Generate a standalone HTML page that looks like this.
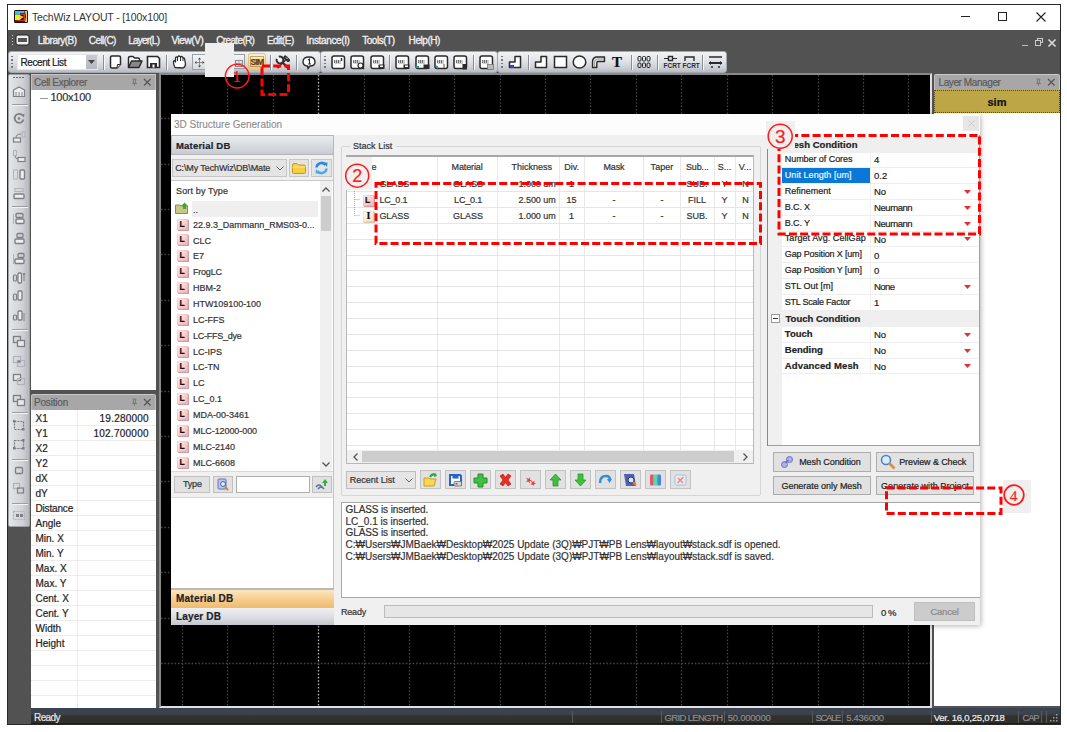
<!DOCTYPE html>
<html><head><meta charset="utf-8"><style>
*{box-sizing:border-box;margin:0;padding:0}
html,body{width:1067px;height:732px;overflow:hidden;background:#fff;font-family:"Liberation Sans",sans-serif;font-size:11px;color:#222}
.a{position:absolute}
.t{position:absolute;white-space:nowrap;line-height:1;-webkit-text-stroke-width:0.2px}
svg{position:absolute;overflow:visible}
</style></head><body>
<div class="a" style="left:7px;top:4px;width:1054px;height:721px;border:1px solid #2a2a2a;background:#525252"></div>
<div class="a" style="left:8px;top:5px;width:1052px;height:25px;background:#fff"></div>
<svg style="left:14px;top:10px" width="14" height="13" viewBox="0 0 14 13"><rect x="0" y="0" width="14" height="13" rx="1.5" fill="#2a0a0a"/><path d="M1 1 H10.5 V3 H6 V4.8 H1 Z" fill="#34c4dc"/><path d="M1 4.8 H5.5 L9 7 L5.5 10.2 H1 Z" fill="#e6f020"/><path d="M6 3.4 H11 V11.6 H4 V10.2 H8.3 Q10 10.2 10 7 Q10 4.8 8.3 4.8 H6 Z" fill="#e63446"/><path d="M5.5 7 H9.5" stroke="#f4b020" stroke-width="1.4"/><path d="M11 1 H13 V12 H11 L12 6.5 Z" fill="#f0dc30"/><rect x="1" y="11" width="10" height="1.2" fill="#5a0a0a"/></svg>
<div class="t" style="left:32.0px;top:12.2px;font-size:10.5px;color:#333;letter-spacing:-0.157px;font-weight:normal;-webkit-text-stroke-width:0">TechWiz LAYOUT - [100x100]</div>
<div class="a" style="left:961px;top:16px;width:9px;height:1px;background:#222"></div>
<div class="a" style="left:998px;top:12px;width:9px;height:9px;border:1px solid #222"></div>
<svg style="left:1036px;top:12px" width="10" height="10" viewBox="0 0 10 10"><path d="M0.5 0.5 L9.5 9.5 M9.5 0.5 L0.5 9.5" stroke="#222" stroke-width="1.1"/></svg>
<div class="a" style="left:8px;top:30px;width:1052px;height:20px;background:#525252"></div>
<svg style="left:11px;top:33px" width="20" height="14" viewBox="0 0 20 14">
<path d="M1.5 2v1M1.5 5v1M1.5 8v1M1.5 11v1" stroke="#ccc" stroke-width="1"/>
<rect x="5" y="2" width="13" height="10" rx="2" fill="#eee" stroke="#222"/>
<rect x="7" y="5" width="9" height="4" fill="#555"/>
</svg>
<div class="t" style="left:37.8px;top:35.5px;font-size:10px;color:#eeeeee;letter-spacing:-0.521px;font-weight:normal;-webkit-text-stroke-width:0.35px">Library(B)</div>
<div class="t" style="left:88.8px;top:35.5px;font-size:10px;color:#eeeeee;letter-spacing:-0.587px;font-weight:normal;-webkit-text-stroke-width:0.35px">Cell(C)</div>
<div class="t" style="left:128.2px;top:35.5px;font-size:10px;color:#eeeeee;letter-spacing:-0.781px;font-weight:normal;-webkit-text-stroke-width:0.35px">Layer(L)</div>
<div class="t" style="left:171.4px;top:35.5px;font-size:10px;color:#eeeeee;letter-spacing:-0.39px;font-weight:normal;-webkit-text-stroke-width:0.35px">View(V)</div>
<div class="t" style="left:216.3px;top:35.5px;font-size:10px;color:#eeeeee;letter-spacing:-0.656px;font-weight:normal;-webkit-text-stroke-width:0.35px">Create(R)</div>
<div class="t" style="left:266.9px;top:35.5px;font-size:10px;color:#eeeeee;letter-spacing:-0.537px;font-weight:normal;-webkit-text-stroke-width:0.35px">Edit(E)</div>
<div class="t" style="left:306.3px;top:35.5px;font-size:10px;color:#eeeeee;letter-spacing:-0.359px;font-weight:normal;-webkit-text-stroke-width:0.35px">Instance(I)</div>
<div class="t" style="left:362.2px;top:35.5px;font-size:10px;color:#eeeeee;letter-spacing:-0.453px;font-weight:normal;-webkit-text-stroke-width:0.35px">Tools(T)</div>
<div class="t" style="left:408.6px;top:35.5px;font-size:10px;color:#eeeeee;letter-spacing:-0.436px;font-weight:normal;-webkit-text-stroke-width:0.35px">Help(H)</div>
<div class="a" style="left:1022px;top:45px;width:6px;height:1px;background:#bbb"></div>
<svg style="left:1035px;top:38px" width="8" height="8" viewBox="0 0 8 8"><rect x="2.5" y="0.5" width="5" height="4" fill="none" stroke="#ccc"/><rect x="0.5" y="2.5" width="5" height="5" fill="#525252" stroke="#ccc"/></svg>
<svg style="left:1048px;top:39px" width="8" height="8" viewBox="0 0 8 8"><path d="M0.5 0.5 L7.5 7.5 M7.5 0.5 L0.5 7.5" stroke="#ddd" stroke-width="1.6"/></svg>
<div class="a" style="left:8px;top:51px;width:313px;height:22px;background:linear-gradient(#f2f3f5 0%,#e3e5e9 40%,#cfd2d7 75%,#b9bdc3 100%);border:1px solid #a4a8ae;border-radius:3px"></div>
<div class="a" style="left:320px;top:51px;width:178px;height:22px;background:linear-gradient(#f2f3f5 0%,#e3e5e9 40%,#cfd2d7 75%,#b9bdc3 100%);border:1px solid #a4a8ae;border-radius:3px"></div>
<div class="a" style="left:497px;top:51px;width:230px;height:22px;background:linear-gradient(#f2f3f5 0%,#e3e5e9 40%,#cfd2d7 75%,#b9bdc3 100%);border:1px solid #a4a8ae;border-radius:3px"></div>
<div class="a" style="left:11px;top:55.5px;width:2px;height:1.6px;background:#7a7a7a"></div>
<div class="a" style="left:11px;top:59px;width:2px;height:1.6px;background:#7a7a7a"></div>
<div class="a" style="left:11px;top:62.5px;width:2px;height:1.6px;background:#7a7a7a"></div>
<div class="a" style="left:11px;top:66px;width:2px;height:1.6px;background:#7a7a7a"></div>
<div class="a" style="left:324px;top:55.5px;width:2px;height:1.6px;background:#7a7a7a"></div>
<div class="a" style="left:324px;top:59px;width:2px;height:1.6px;background:#7a7a7a"></div>
<div class="a" style="left:324px;top:62.5px;width:2px;height:1.6px;background:#7a7a7a"></div>
<div class="a" style="left:324px;top:66px;width:2px;height:1.6px;background:#7a7a7a"></div>
<div class="a" style="left:501px;top:55.5px;width:2px;height:1.6px;background:#7a7a7a"></div>
<div class="a" style="left:501px;top:59px;width:2px;height:1.6px;background:#7a7a7a"></div>
<div class="a" style="left:501px;top:62.5px;width:2px;height:1.6px;background:#7a7a7a"></div>
<div class="a" style="left:501px;top:66px;width:2px;height:1.6px;background:#7a7a7a"></div>
<div class="a" style="left:17px;top:54px;width:81px;height:16px;background:#fff;border:1px solid #e4e6e9"></div>
<div class="a" style="left:86px;top:55px;width:11px;height:14px;background:linear-gradient(#c8ccd1,#b4b8be)"></div>
<svg style="left:88px;top:60px" width="7" height="4"><path d="M0 0 L7 0 L3.5 4 Z" fill="#444"/></svg>
<div class="t" style="left:20.5px;top:57.5px;font-size:10px;color:#1a1a1a;letter-spacing:-0.412px;font-weight:normal;">Recent List</div>
<div class="a" style="left:103px;top:55px;width:1px;height:15px;background:#8a8e94"></div>
<div class="a" style="left:104px;top:55px;width:1px;height:15px;background:#f6f6f6"></div>
<div class="a" style="left:166px;top:55px;width:1px;height:15px;background:#8a8e94"></div>
<div class="a" style="left:167px;top:55px;width:1px;height:15px;background:#f6f6f6"></div>
<div class="a" style="left:270px;top:55px;width:1px;height:15px;background:#8a8e94"></div>
<div class="a" style="left:271px;top:55px;width:1px;height:15px;background:#f6f6f6"></div>
<div class="a" style="left:296px;top:55px;width:1px;height:15px;background:#8a8e94"></div>
<div class="a" style="left:297px;top:55px;width:1px;height:15px;background:#f6f6f6"></div>
<div class="a" style="left:389px;top:55px;width:1px;height:15px;background:#8a8e94"></div>
<div class="a" style="left:390px;top:55px;width:1px;height:15px;background:#f6f6f6"></div>
<div class="a" style="left:473px;top:55px;width:1px;height:15px;background:#8a8e94"></div>
<div class="a" style="left:474px;top:55px;width:1px;height:15px;background:#f6f6f6"></div>
<div class="a" style="left:528px;top:55px;width:1px;height:15px;background:#8a8e94"></div>
<div class="a" style="left:529px;top:55px;width:1px;height:15px;background:#f6f6f6"></div>
<div class="a" style="left:631px;top:55px;width:1px;height:15px;background:#8a8e94"></div>
<div class="a" style="left:632px;top:55px;width:1px;height:15px;background:#f6f6f6"></div>
<div class="a" style="left:657px;top:55px;width:1px;height:15px;background:#8a8e94"></div>
<div class="a" style="left:658px;top:55px;width:1px;height:15px;background:#f6f6f6"></div>
<div class="a" style="left:702px;top:55px;width:1px;height:15px;background:#8a8e94"></div>
<div class="a" style="left:703px;top:55px;width:1px;height:15px;background:#f6f6f6"></div>
<svg style="left:109px;top:55px" width="13" height="14" viewBox="0 0 13 14"><path d="M1.5 2.5 Q1.5 1 3 1 L10 1 Q11.5 1 11.5 2.5 L11.5 9.5 L8 13 L3 13 Q1.5 13 1.5 11.5 Z" fill="#fff" stroke="#2a2a2a" stroke-width="1.5"/><path d="M11.5 9.5 L8.5 9.5 L8 13" fill="#ddd" stroke="#2a2a2a" stroke-width="1"/></svg>
<svg style="left:127px;top:55px" width="16" height="14" viewBox="0 0 16 14"><path d="M1.5 12.5 L1.5 3 Q1.5 1.5 3 1.5 L6 1.5 L7.5 3 L11 3 Q12.5 3 12.5 4.5 L12.5 6" fill="#fff" stroke="#2a2a2a" stroke-width="1.5"/><path d="M1.5 12.5 L4.5 6 L15 6 L12 12.5 Z" fill="#888" stroke="#2a2a2a" stroke-width="1.5" stroke-linejoin="round"/></svg>
<svg style="left:146px;top:55px" width="15" height="14" viewBox="0 0 15 14"><path d="M1.5 1.5 H11.5 L13.5 3.5 V12.5 H1.5 Z" fill="#fff" stroke="#2a2a2a" stroke-width="1.6"/><rect x="4" y="8" width="7" height="5" fill="#2a2a2a"/><rect x="6.5" y="9.5" width="2" height="3" fill="#fff"/></svg>
<svg style="left:172px;top:55px" width="16" height="14" viewBox="0 0 16 14"><path d="M3 12.5 Q1 9 1.5 6.5 Q2 5 3 6 L3.5 7 L3.5 3 Q4 1.5 5 2 L5.5 2.5 L6 1.5 Q7 0.5 8 1.5 L8.5 2 Q9.5 1 10.5 2 L11 3 Q12 2.5 12.5 3.5 L13.5 9 Q13.5 12 11 13 Z" fill="#fff" stroke="#2a2a2a" stroke-width="1.3" stroke-linejoin="round"/><path d="M5.5 2.5 V6 M8.5 2 V6 M11 3 V6" stroke="#2a2a2a" stroke-width="1"/></svg>
<div class="a" style="left:192px;top:54px;width:14px;height:16px;border:1px solid #9aa0a8;background:linear-gradient(#f4f5f7,#d8dbe0)"></div>
<svg style="left:194px;top:57px" width="11" height="11" viewBox="0 0 11 11"><path d="M5.5 0.5 L7 2.5 H4 Z M5.5 10.5 L7 8.5 H4 Z M0.5 5.5 L2.5 4 V7 Z M10.5 5.5 L8.5 4 V7 Z" fill="#444"/><path d="M5.5 2 V9 M2 5.5 H9" stroke="#777" stroke-width="0.8"/></svg>
<div class="a" style="left:233px;top:54px;width:12px;height:15px;border:1px solid #9aa0a8;border-left:none;background:linear-gradient(#f4f5f7,#d8dbe0)"></div>
<svg style="left:235px;top:60px" width="8" height="7" viewBox="0 0 8 7"><rect x="0.5" y="0.5" width="7" height="6" fill="none" stroke="#888"/><path d="M0.5 3.5 H7.5 M4 0.5 V6.5" stroke="#aaa"/></svg>
<div class="a" style="left:248px;top:53px;width:18px;height:17px;border:1px solid #e6c27a;border-radius:2px;background:linear-gradient(#fff0c8,#fcd88e 60%,#f6c870)"></div>
<svg style="left:250px;top:56px" width="14" height="11" viewBox="0 0 14 11"><rect x="0.5" y="0.5" width="13" height="10" fill="none" stroke="#6a5030" stroke-width="0.9" stroke-dasharray="1 1"/></svg>
<div class="t" style="left:250.5px;top:57.8px;font-size:8.5px;color:#5a3a1a;letter-spacing:-0.708px;font-weight:bold;">SIM</div>
<svg style="left:275px;top:55px" width="16" height="14" viewBox="0 0 16 14"><path d="M6.5 6.5 L12.5 12.5" stroke="#303030" stroke-width="2.4" stroke-linecap="round"/><path d="M1.8 3.84 A3.4 3.4 0 1 0 3.84 1.8" fill="#f4f4f4" stroke="#303030" stroke-width="2"/><path d="M11.5 4 L4 11.5" stroke="#333" stroke-width="1.5"/><path d="M4 11.5 L2.5 13" stroke="#203060" stroke-width="1.8"/><path d="M10.2 2.2 L13.2 5.2" stroke="#303030" stroke-width="3.6" stroke-linecap="round"/><path d="M11 2.5 L12.5 4" stroke="#e8e8e8" stroke-width="1"/></svg>
<svg style="left:302px;top:56px" width="14" height="13" viewBox="0 0 14 13"><path d="M7 1 Q13 1 13 6 Q13 10 8 10 L6 12.5 L5.5 10 Q1 9.5 1 6 Q1 1 7 1 Z" fill="#fff" stroke="#2a2a2a" stroke-width="1.4"/><path d="M6 4 L7.5 3 V8 M6 8 H9" stroke="#2a2a2a" stroke-width="1.1" fill="none"/></svg>
<svg style="left:330.5px;top:54.5px" width="15" height="15" viewBox="0 0 15 15"><rect x="1" y="1" width="12.5" height="12.5" rx="2" fill="#fff" stroke="#2a2a2a" stroke-width="1.5"/><path d="M3.5 6 H10 M3.5 8 H10" stroke="#999" stroke-width="1"/><path d="M3.5 5 v3 M5.5 5 v3 M7.5 5 v3" stroke="#555" stroke-width="0.8"/><path d="M10.5 3 V6" stroke="#2a2a2a" stroke-width="1.4"/></svg>
<svg style="left:350px;top:54.5px" width="15" height="15" viewBox="0 0 15 15"><rect x="1" y="1" width="12.5" height="12.5" rx="2" fill="#fff" stroke="#2a2a2a" stroke-width="1.5"/><path d="M3.5 6 H10 M3.5 8 H10" stroke="#999" stroke-width="1"/><path d="M3.5 5 v3 M5.5 5 v3 M7.5 5 v3" stroke="#555" stroke-width="0.8"/><circle cx="10.5" cy="10.5" r="2.5" fill="#fff" stroke="#2a2a2a" stroke-width="1.2"/><path d="M12 12 L14 14" stroke="#2a2a2a" stroke-width="1.4"/></svg>
<svg style="left:369.5px;top:54.5px" width="15" height="15" viewBox="0 0 15 15"><rect x="1" y="1" width="12.5" height="12.5" rx="2" fill="#fff" stroke="#2a2a2a" stroke-width="1.5"/><path d="M3.5 6 H10 M3.5 8 H10" stroke="#999" stroke-width="1"/><path d="M3.5 5 v3 M5.5 5 v3 M7.5 5 v3" stroke="#555" stroke-width="0.8"/><rect x="8.5" y="9.5" width="6" height="4.5" fill="#2a2a2a"/><rect x="10" y="10.5" width="3" height="1.5" fill="#fff"/></svg>
<svg style="left:395px;top:54.5px" width="15" height="15" viewBox="0 0 15 15"><rect x="1" y="1" width="12.5" height="12.5" rx="2" fill="#fff" stroke="#2a2a2a" stroke-width="1.5"/><path d="M3.5 6 H10 M3.5 8 H10" stroke="#999" stroke-width="1"/><path d="M3.5 5 v3 M5.5 5 v3 M7.5 5 v3" stroke="#555" stroke-width="0.8"/><rect x="8.5" y="9.5" width="6" height="4.5" fill="#2a2a2a"/><rect x="10" y="10.5" width="3" height="1.5" fill="#fff"/></svg>
<svg style="left:414.5px;top:54.5px" width="15" height="15" viewBox="0 0 15 15"><rect x="1" y="1" width="12.5" height="12.5" rx="2" fill="#fff" stroke="#2a2a2a" stroke-width="1.5"/><path d="M3.5 6 H10 M3.5 8 H10" stroke="#999" stroke-width="1"/><path d="M3.5 5 v3 M5.5 5 v3 M7.5 5 v3" stroke="#555" stroke-width="0.8"/><rect x="8.5" y="9.5" width="6" height="4.5" fill="#2a2a2a"/><path d="M1 12 L4 12" stroke="#2a9a90" stroke-width="2"/></svg>
<svg style="left:434px;top:54.5px" width="15" height="15" viewBox="0 0 15 15"><rect x="1" y="1" width="12.5" height="12.5" rx="2" fill="#fff" stroke="#2a2a2a" stroke-width="1.5"/><path d="M3.5 6 H10 M3.5 8 H10" stroke="#999" stroke-width="1"/><path d="M3.5 5 v3 M5.5 5 v3 M7.5 5 v3" stroke="#555" stroke-width="0.8"/><path d="M2 11 L4 13" stroke="#2a9a90" stroke-width="2"/><path d="M10 9 V13" stroke="#888" stroke-width="1.5"/></svg>
<svg style="left:453px;top:54.5px" width="15" height="15" viewBox="0 0 15 15"><rect x="1" y="1" width="12.5" height="12.5" rx="2" fill="#fff" stroke="#2a2a2a" stroke-width="1.5"/><path d="M3.5 6 H10 M3.5 8 H10" stroke="#999" stroke-width="1"/><path d="M3.5 5 v3 M5.5 5 v3 M7.5 5 v3" stroke="#555" stroke-width="0.8"/><rect x="9.5" y="9" width="4.5" height="5.5" fill="#2a2a2a"/></svg>
<svg style="left:478.5px;top:54.5px" width="15" height="15" viewBox="0 0 15 15"><rect x="1" y="1" width="12.5" height="12.5" rx="2" fill="#fff" stroke="#2a2a2a" stroke-width="1.5"/><path d="M3.5 6 H10 M3.5 8 H10" stroke="#999" stroke-width="1"/><path d="M3.5 5 v3 M5.5 5 v3 M7.5 5 v3" stroke="#555" stroke-width="0.8"/><rect x="8.5" y="9.5" width="6" height="5" fill="#bbb" stroke="#777" stroke-width="0.8"/></svg>
<svg style="left:508px;top:55px" width="14" height="14" viewBox="0 0 14 14"><path d="M7 1.5 H12.5 V12.5 H1.5 V7 H7 Z" fill="#fff" stroke="#2a2a2a" stroke-width="1.5" stroke-linejoin="round"/><rect x="2" y="10" width="4" height="3" fill="#3040d0"/></svg>
<svg style="left:534px;top:55px" width="14" height="14" viewBox="0 0 14 14"><path d="M7 1.5 H12.5 V12.5 H1.5 V7 H7 Z" fill="#fff" stroke="#2a2a2a" stroke-width="1.5" stroke-linejoin="round"/></svg>
<svg style="left:553px;top:55px" width="15" height="14" viewBox="0 0 15 14"><rect x="1.5" y="1.5" width="12" height="11" fill="#fff" stroke="#2a2a2a" stroke-width="1.5"/></svg>
<svg style="left:572px;top:55px" width="15" height="14" viewBox="0 0 15 14"><ellipse cx="7.5" cy="7" rx="6.3" ry="6" fill="#fff" stroke="#2a2a2a" stroke-width="1.5"/></svg>
<svg style="left:591px;top:55px" width="15" height="14" viewBox="0 0 15 14"><path d="M1.5 12.5 V7 Q1.5 3 5 2 L13.5 2 V6.5 L7 6.5 Q5.8 6.5 5.8 8 V12.5 Z" fill="#e8e8e8" stroke="#2a2a2a" stroke-width="1.4" stroke-linejoin="round"/><path d="M3.5 12.5 V7.5 Q3.5 4.5 6 4 L13 4" fill="none" stroke="#888" stroke-width="0.8"/></svg>
<div class="t" style="left:612.0px;top:55.0px;font-size:15px;color:#111;letter-spacing:0px;font-weight:bold;font-family:'Liberation Serif',serif">T</div>
<svg style="left:637px;top:55px" width="14" height="14" viewBox="0 0 14 14"><g fill="none" stroke="#222" stroke-width="1"><rect x="1" y="1.5" width="3" height="4.5" rx="1"/><rect x="5.5" y="1.5" width="3" height="4.5" rx="1"/><rect x="10" y="1.5" width="3" height="4.5" rx="1"/><rect x="1" y="8" width="3" height="4.5" rx="1"/><rect x="5.5" y="8" width="3" height="4.5" rx="1"/><rect x="10" y="8" width="3" height="4.5" rx="1"/></g></svg>
<svg style="left:663px;top:55px" width="15" height="14" viewBox="0 0 15 14"><path d="M1 3.5 H5 M10 3.5 H14" stroke="#2a2a2a" stroke-width="1"/><rect x="5.5" y="1.5" width="4" height="4" fill="none" stroke="#2a2a2a" stroke-width="1.4"/><text x="0.5" y="13" font-size="6.5" font-family="Liberation Sans" font-weight="bold" fill="#2a2a2a">FCRT</text></svg>
<svg style="left:682px;top:55px" width="15" height="14" viewBox="0 0 15 14"><path d="M3 6 V2 H12 V6" fill="none" stroke="#2a2a2a" stroke-width="1.4"/><text x="0.5" y="13" font-size="6.5" font-family="Liberation Sans" font-weight="bold" fill="#2a2a2a">FCRT</text></svg>
<svg style="left:708px;top:55px" width="15" height="14" viewBox="0 0 15 14"><path d="M1 2 H14" stroke="#2a2a2a" stroke-width="1.5"/><path d="M1 8 H14" stroke="#2a2a2a" stroke-width="2"/><path d="M2 6.5 L4 8 L2 9.5 M13 6.5 L11 8 L13 9.5" fill="none" stroke="#2a2a2a"/><path d="M4 11 V13 M11 11 V13" stroke="#2a2a2a" stroke-width="1.5"/></svg>
<div class="a" style="left:8px;top:74px;width:22px;height:453px;background:linear-gradient(90deg,#e4e6e9,#cdd0d4 70%,#b4b8bd);border:1px solid #9ea2a8;border-radius:2px"></div>
<div class="a" style="left:12px;top:104px;width:16px;height:1px;background:#9a9ea4"></div>
<div class="a" style="left:12px;top:105px;width:16px;height:1px;background:#f4f4f4"></div>
<div class="a" style="left:12px;top:206px;width:16px;height:1px;background:#9a9ea4"></div>
<div class="a" style="left:12px;top:207px;width:16px;height:1px;background:#f4f4f4"></div>
<div class="a" style="left:12px;top:329px;width:16px;height:1px;background:#9a9ea4"></div>
<div class="a" style="left:12px;top:330px;width:16px;height:1px;background:#f4f4f4"></div>
<div class="a" style="left:12px;top:412px;width:16px;height:1px;background:#9a9ea4"></div>
<div class="a" style="left:12px;top:413px;width:16px;height:1px;background:#f4f4f4"></div>
<div class="a" style="left:12px;top:459px;width:16px;height:1px;background:#9a9ea4"></div>
<div class="a" style="left:12px;top:460px;width:16px;height:1px;background:#f4f4f4"></div>
<div class="a" style="left:12px;top:503px;width:16px;height:1px;background:#9a9ea4"></div>
<div class="a" style="left:12px;top:504px;width:16px;height:1px;background:#f4f4f4"></div>
<svg style="left:12px;top:85px" width="14" height="14" viewBox="0 0 14 14"><path d="M1.5 5 L7 2 L12.5 5 V11.5 H1.5 Z" fill="#eee" stroke="#7c8086" stroke-width="1.2"/><path d="M4 7 V11 M7 7 V11 M10 7 V11" stroke="#7c8086"/></svg>
<svg style="left:12px;top:111px" width="14" height="14" viewBox="0 0 14 14"><path d="M11 5 A4.5 4.5 0 1 0 11.5 8.5" fill="none" stroke="#7c8086" stroke-width="1.8"/><circle cx="7" cy="7.5" r="1.3" fill="#7c8086"/><path d="M9.5 3.5 L12.5 3 L12 6.5 Z" fill="#7c8086"/></svg>
<svg style="left:12px;top:130px" width="14" height="14" viewBox="0 0 14 14"><rect x="1.5" y="8" width="7" height="4" fill="#eee" stroke="#7c8086" stroke-width="1.2"/><path d="M4 8 Q4 4 9 4" fill="none" stroke="#7c8086"/><rect x="10" y="2" width="3" height="5" fill="none" stroke="#b0b4ba"/></svg>
<svg style="left:12px;top:149px" width="14" height="14" viewBox="0 0 14 14"><rect x="1.5" y="1.5" width="3" height="5" fill="none" stroke="#b0b4ba"/><path d="M3 7 Q3 10 7 10" fill="none" stroke="#7c8086"/><rect x="6" y="8.5" width="7" height="4" fill="#eee" stroke="#7c8086" stroke-width="1.2"/></svg>
<svg style="left:12px;top:168px" width="14" height="14" viewBox="0 0 14 14"><rect x="1.5" y="2" width="4" height="9" fill="none" stroke="#b0b4ba"/><rect x="8" y="2" width="4.5" height="9" rx="1" fill="#eee" stroke="#7c8086" stroke-width="1.4"/></svg>
<svg style="left:12px;top:187px" width="14" height="14" viewBox="0 0 14 14"><rect x="3" y="1.5" width="8" height="3" fill="none" stroke="#b0b4ba"/><rect x="2" y="7" width="10" height="4.5" rx="1" fill="#eee" stroke="#7c8086" stroke-width="1.4"/></svg>
<svg style="left:12px;top:212px" width="14" height="14" viewBox="0 0 14 14"><rect x="4" y="1.5" width="7" height="4" rx="1" fill="none" stroke="#7c8086" stroke-width="1.3"/><rect x="4" y="7" width="8" height="4.5" rx="1" fill="#eee" stroke="#7c8086" stroke-width="1.4"/><path d="M1.5 2 V12" stroke="#b0b4ba"/></svg>
<svg style="left:12px;top:232px" width="14" height="14" viewBox="0 0 14 14"><rect x="5" y="1.5" width="6" height="4" rx="1" fill="none" stroke="#7c8086" stroke-width="1.3"/><rect x="3" y="7" width="9" height="4.5" rx="1" fill="#eee" stroke="#7c8086" stroke-width="1.4"/></svg>
<svg style="left:12px;top:251.7px" width="14" height="14" viewBox="0 0 14 14"><rect x="6" y="1.5" width="6" height="4" rx="1" fill="none" stroke="#7c8086" stroke-width="1.3"/><rect x="3" y="7" width="9" height="4.5" rx="1" fill="#eee" stroke="#7c8086" stroke-width="1.4"/><path d="M1.5 2 V12" stroke="#b0b4ba"/></svg>
<svg style="left:12px;top:270.5px" width="14" height="14" viewBox="0 0 14 14"><rect x="1.5" y="4" width="3" height="6" rx="1" fill="none" stroke="#7c8086" stroke-width="1.2"/><rect x="6" y="2" width="3.5" height="10" rx="1" fill="#eee" stroke="#7c8086" stroke-width="1.3"/><path d="M12 2 V10 M11 4 L12 2 L13 4" fill="none" stroke="#7c8086"/></svg>
<svg style="left:12px;top:289px" width="14" height="14" viewBox="0 0 14 14"><rect x="1.5" y="5" width="3" height="6" rx="1" fill="none" stroke="#7c8086" stroke-width="1.2"/><rect x="6" y="2" width="4" height="9" rx="1" fill="#eee" stroke="#7c8086" stroke-width="1.3"/></svg>
<svg style="left:12px;top:309px" width="14" height="14" viewBox="0 0 14 14"><rect x="1.5" y="6" width="3" height="5" rx="1" fill="none" stroke="#7c8086" stroke-width="1.2"/><rect x="6" y="2" width="4" height="9" rx="1" fill="#eee" stroke="#7c8086" stroke-width="1.3"/><path d="M12 4 V12" stroke="#7c8086"/></svg>
<svg style="left:12px;top:335px" width="14" height="14" viewBox="0 0 14 14"><rect x="1.5" y="1.5" width="7" height="6" fill="none" stroke="#7c8086" stroke-width="1.3"/><rect x="5.5" y="5.5" width="7" height="6" fill="#e8e8e8" stroke="#7c8086" stroke-width="1.3"/></svg>
<svg style="left:12px;top:355px" width="14" height="14" viewBox="0 0 14 14"><rect x="1.5" y="1.5" width="7" height="6" fill="none" stroke="#b0b4ba" stroke-width="1.2"/><rect x="5.5" y="5.5" width="7" height="6" fill="none" stroke="#b0b4ba" stroke-width="1.2"/><rect x="5.5" y="5.5" width="3" height="2" fill="#7c8086"/></svg>
<svg style="left:12px;top:373px" width="14" height="14" viewBox="0 0 14 14"><rect x="1.5" y="1.5" width="7" height="6" fill="#e8e8e8" stroke="#7c8086" stroke-width="1.3"/><rect x="5.5" y="5.5" width="7" height="6" fill="none" stroke="#b0b4ba" stroke-width="1.2"/></svg>
<svg style="left:12px;top:394px" width="14" height="14" viewBox="0 0 14 14"><rect x="1.5" y="1.5" width="7" height="6" fill="none" stroke="#7c8086" stroke-width="1.3"/><rect x="5.5" y="5.5" width="7" height="6" fill="#e8e8e8" stroke="#7c8086" stroke-width="1.3"/></svg>
<svg style="left:12px;top:418.5px" width="14" height="14" viewBox="0 0 14 14"><rect x="2.5" y="2.5" width="9" height="8" fill="none" stroke="#7c8086" stroke-width="1.2" stroke-dasharray="2 1"/><rect x="1" y="1" width="2.5" height="2.5" fill="#7c8086"/><rect x="10" y="9" width="2.5" height="2.5" fill="#7c8086"/></svg>
<svg style="left:12px;top:438px" width="14" height="14" viewBox="0 0 14 14"><rect x="2.5" y="2.5" width="9" height="8" fill="none" stroke="#7c8086" stroke-width="1.2" stroke-dasharray="2 1"/><rect x="1" y="9" width="2.5" height="2.5" fill="#7c8086"/><rect x="10" y="1" width="2.5" height="2.5" fill="#7c8086"/><rect x="10" y="9" width="2.5" height="2.5" fill="#7c8086"/></svg>
<svg style="left:12px;top:464px" width="14" height="14" viewBox="0 0 14 14"><rect x="3.5" y="3.5" width="7" height="6" rx="1" fill="none" stroke="#7c8086" stroke-width="1.3"/></svg>
<svg style="left:12px;top:482.4px" width="14" height="14" viewBox="0 0 14 14"><rect x="1.5" y="1.5" width="6" height="5" fill="none" stroke="#b0b4ba" stroke-width="1.2"/><rect x="5.5" y="6" width="6" height="5" fill="none" stroke="#7c8086" stroke-width="1.2"/></svg>
<svg style="left:12px;top:508px" width="14" height="14" viewBox="0 0 14 14"><rect x="1.5" y="3.5" width="11" height="8" fill="none" stroke="#b0b4ba" stroke-width="1.2" stroke-dasharray="2 1"/><rect x="4" y="6" width="3" height="3" fill="#7c8086"/><rect x="8" y="6" width="3" height="3" fill="#7c8086"/></svg>
<div class="a" style="left:13px;top:77px;width:2px;height:1px;background:#666"></div>
<div class="a" style="left:16px;top:77px;width:2px;height:1px;background:#666"></div>
<div class="a" style="left:19px;top:77px;width:2px;height:1px;background:#666"></div>
<div class="a" style="left:22px;top:77px;width:2px;height:1px;background:#666"></div>
<div class="a" style="left:31px;top:74px;width:125px;height:16px;background:#a7a7a7;border-top:1px solid #c9c9c9;border-left:1px solid #c0c0c0;border-right:1px solid #c0c0c0"></div>
<div class="t" style="left:34.0px;top:77.5px;font-size:10px;color:#5a5a5a;letter-spacing:-0.327px;font-weight:normal;">Cell Explorer</div>
<svg style="left:131px;top:78px" width="21" height="9"><path d="M1.5 1 H5.5 M2.5 1 V5 H4.5 V1 M1 5.5 H6 M3.5 5.5 V8" fill="none" stroke="#777" stroke-width="0.9"/><path d="M13 1 L19.5 7.5 M19.5 1 L13 7.5" stroke="#555" stroke-width="1.2"/></svg>
<div class="a" style="left:31px;top:90px;width:125px;height:300px;background:#fff"></div>
<div class="a" style="left:40px;top:98px;width:8px;height:1px;background:#999"></div>
<div class="t" style="left:50.5px;top:92.0px;font-size:11px;color:#333;letter-spacing:-0.246px;font-weight:normal;">100x100</div>
<div class="a" style="left:31px;top:394px;width:125px;height:16px;background:#a7a7a7;border-top:1px solid #c9c9c9;border-left:1px solid #c0c0c0;border-right:1px solid #c0c0c0;border-radius:2px 2px 0 0"></div>
<div class="t" style="left:34.0px;top:397.5px;font-size:10px;color:#5a5a5a;letter-spacing:-0.197px;font-weight:normal;">Position</div>
<svg style="left:131px;top:398px" width="21" height="9"><path d="M1.5 1 H5.5 M2.5 1 V5 H4.5 V1 M1 5.5 H6 M3.5 5.5 V8" fill="none" stroke="#777" stroke-width="0.9"/><path d="M13 1 L19.5 7.5 M19.5 1 L13 7.5" stroke="#555" stroke-width="1.2"/></svg>
<div class="a" style="left:31px;top:410px;width:125px;height:298px;background:#fff"></div>
<div class="a" style="left:31px;top:425px;width:125px;height:1px;background:#ececec"></div>
<div class="t" style="left:35.5px;top:413.5px;font-size:10px;color:#222;letter-spacing:0px;font-weight:normal;">X1</div>
<div class="a" style="left:31px;top:440px;width:125px;height:1px;background:#ececec"></div>
<div class="t" style="left:35.5px;top:428.5px;font-size:10px;color:#222;letter-spacing:0px;font-weight:normal;">Y1</div>
<div class="a" style="left:31px;top:455px;width:125px;height:1px;background:#ececec"></div>
<div class="t" style="left:35.5px;top:443.5px;font-size:10px;color:#222;letter-spacing:0px;font-weight:normal;">X2</div>
<div class="a" style="left:31px;top:470px;width:125px;height:1px;background:#ececec"></div>
<div class="t" style="left:35.5px;top:458.5px;font-size:10px;color:#222;letter-spacing:0px;font-weight:normal;">Y2</div>
<div class="a" style="left:31px;top:485px;width:125px;height:1px;background:#ececec"></div>
<div class="t" style="left:35.5px;top:473.5px;font-size:10px;color:#222;letter-spacing:0px;font-weight:normal;">dX</div>
<div class="a" style="left:31px;top:500px;width:125px;height:1px;background:#ececec"></div>
<div class="t" style="left:35.5px;top:488.5px;font-size:10px;color:#222;letter-spacing:0px;font-weight:normal;">dY</div>
<div class="a" style="left:31px;top:515px;width:125px;height:1px;background:#ececec"></div>
<div class="t" style="left:35.5px;top:503.5px;font-size:10px;color:#222;letter-spacing:-0.163px;font-weight:normal;">Distance</div>
<div class="a" style="left:31px;top:530px;width:125px;height:1px;background:#ececec"></div>
<div class="t" style="left:35.5px;top:518.5px;font-size:10px;color:#222;letter-spacing:0px;font-weight:normal;">Angle</div>
<div class="a" style="left:31px;top:545px;width:125px;height:1px;background:#ececec"></div>
<div class="t" style="left:35.5px;top:533.5px;font-size:10px;color:#222;letter-spacing:0px;font-weight:normal;">Min. X</div>
<div class="a" style="left:31px;top:560px;width:125px;height:1px;background:#ececec"></div>
<div class="t" style="left:35.5px;top:548.5px;font-size:10px;color:#222;letter-spacing:0px;font-weight:normal;">Min. Y</div>
<div class="a" style="left:31px;top:575px;width:125px;height:1px;background:#ececec"></div>
<div class="t" style="left:35.5px;top:563.5px;font-size:10px;color:#222;letter-spacing:0px;font-weight:normal;">Max. X</div>
<div class="a" style="left:31px;top:590px;width:125px;height:1px;background:#ececec"></div>
<div class="t" style="left:35.5px;top:578.5px;font-size:10px;color:#222;letter-spacing:0px;font-weight:normal;">Max. Y</div>
<div class="a" style="left:31px;top:605px;width:125px;height:1px;background:#ececec"></div>
<div class="t" style="left:35.5px;top:593.5px;font-size:10px;color:#222;letter-spacing:0px;font-weight:normal;">Cent. X</div>
<div class="a" style="left:31px;top:620px;width:125px;height:1px;background:#ececec"></div>
<div class="t" style="left:35.5px;top:608.5px;font-size:10px;color:#222;letter-spacing:0px;font-weight:normal;">Cent. Y</div>
<div class="a" style="left:31px;top:635px;width:125px;height:1px;background:#ececec"></div>
<div class="t" style="left:35.5px;top:623.5px;font-size:10px;color:#222;letter-spacing:0px;font-weight:normal;">Width</div>
<div class="a" style="left:31px;top:650px;width:125px;height:1px;background:#ececec"></div>
<div class="t" style="left:35.5px;top:638.5px;font-size:10px;color:#222;letter-spacing:0px;font-weight:normal;">Height</div>
<div class="a" style="left:31px;top:665px;width:125px;height:1px;background:#ececec"></div>
<div class="a" style="left:31px;top:680px;width:125px;height:1px;background:#ececec"></div>
<div class="a" style="left:31px;top:695px;width:125px;height:1px;background:#ececec"></div>
<div class="a" style="left:31px;top:710px;width:125px;height:1px;background:#ececec"></div>
<div class="a" style="left:77px;top:410px;width:1px;height:298px;background:#ececec"></div>
<div class="t" style="left:99.6px;top:413.5px;font-size:10px;color:#222;letter-spacing:0.213px;font-weight:normal;">19.280000</div>
<div class="t" style="left:93.4px;top:428.5px;font-size:10px;color:#222;letter-spacing:0.256px;font-weight:normal;">102.700000</div>
<div class="a" style="left:159px;top:73px;width:773px;height:635px;background:#000;border-top:2px solid #8a8a8a;border-left:2px solid #8a8a8a;border-right:2px solid #e0e0e0;border-bottom:2px solid #e0e0e0"></div>
<svg style="left:0;top:0" width="1067" height="732"><line x1="182.5" y1="75" x2="182.5" y2="706" stroke="#444444" stroke-width="1.3" stroke-dasharray="1.6 1.8"/><line x1="227.5" y1="75" x2="227.5" y2="706" stroke="#444444" stroke-width="1.3" stroke-dasharray="1.6 1.8"/><line x1="273.5" y1="75" x2="273.5" y2="706" stroke="#444444" stroke-width="1.3" stroke-dasharray="1.6 1.8"/><line x1="318.5" y1="75" x2="318.5" y2="706" stroke="#b8b8b8" stroke-width="1.3" stroke-dasharray="1.6 1.8"/><line x1="364.5" y1="75" x2="364.5" y2="706" stroke="#444444" stroke-width="1.3" stroke-dasharray="1.6 1.8"/><line x1="409.5" y1="75" x2="409.5" y2="706" stroke="#444444" stroke-width="1.3" stroke-dasharray="1.6 1.8"/><line x1="454.5" y1="75" x2="454.5" y2="706" stroke="#444444" stroke-width="1.3" stroke-dasharray="1.6 1.8"/><line x1="500.5" y1="75" x2="500.5" y2="706" stroke="#444444" stroke-width="1.3" stroke-dasharray="1.6 1.8"/><line x1="545.5" y1="75" x2="545.5" y2="706" stroke="#444444" stroke-width="1.3" stroke-dasharray="1.6 1.8"/><line x1="590.5" y1="75" x2="590.5" y2="706" stroke="#444444" stroke-width="1.3" stroke-dasharray="1.6 1.8"/><line x1="636.5" y1="75" x2="636.5" y2="706" stroke="#444444" stroke-width="1.3" stroke-dasharray="1.6 1.8"/><line x1="681.5" y1="75" x2="681.5" y2="706" stroke="#444444" stroke-width="1.3" stroke-dasharray="1.6 1.8"/><line x1="727.5" y1="75" x2="727.5" y2="706" stroke="#444444" stroke-width="1.3" stroke-dasharray="1.6 1.8"/><line x1="772.5" y1="75" x2="772.5" y2="706" stroke="#444444" stroke-width="1.3" stroke-dasharray="1.6 1.8"/><line x1="818.5" y1="75" x2="818.5" y2="706" stroke="#444444" stroke-width="1.3" stroke-dasharray="1.6 1.8"/><line x1="863.5" y1="75" x2="863.5" y2="706" stroke="#444444" stroke-width="1.3" stroke-dasharray="1.6 1.8"/><line x1="908.5" y1="75" x2="908.5" y2="706" stroke="#444444" stroke-width="1.3" stroke-dasharray="1.6 1.8"/><line x1="161" y1="118.5" x2="930" y2="118.5" stroke="#444444" stroke-width="1.3" stroke-dasharray="1.6 1.8"/><line x1="161" y1="164.5" x2="930" y2="164.5" stroke="#444444" stroke-width="1.3" stroke-dasharray="1.6 1.8"/><line x1="161" y1="209.5" x2="930" y2="209.5" stroke="#444444" stroke-width="1.3" stroke-dasharray="1.6 1.8"/><line x1="161" y1="254.5" x2="930" y2="254.5" stroke="#444444" stroke-width="1.3" stroke-dasharray="1.6 1.8"/><line x1="161" y1="300.5" x2="930" y2="300.5" stroke="#444444" stroke-width="1.3" stroke-dasharray="1.6 1.8"/><line x1="161" y1="345.5" x2="930" y2="345.5" stroke="#444444" stroke-width="1.3" stroke-dasharray="1.6 1.8"/><line x1="161" y1="391.5" x2="930" y2="391.5" stroke="#444444" stroke-width="1.3" stroke-dasharray="1.6 1.8"/><line x1="161" y1="436.5" x2="930" y2="436.5" stroke="#444444" stroke-width="1.3" stroke-dasharray="1.6 1.8"/><line x1="161" y1="481.5" x2="930" y2="481.5" stroke="#444444" stroke-width="1.3" stroke-dasharray="1.6 1.8"/><line x1="161" y1="527.5" x2="930" y2="527.5" stroke="#444444" stroke-width="1.3" stroke-dasharray="1.6 1.8"/><line x1="161" y1="572.5" x2="930" y2="572.5" stroke="#444444" stroke-width="1.3" stroke-dasharray="1.6 1.8"/><line x1="161" y1="618.5" x2="930" y2="618.5" stroke="#444444" stroke-width="1.3" stroke-dasharray="1.6 1.8"/><line x1="161" y1="663.5" x2="930" y2="663.5" stroke="#444444" stroke-width="1.3" stroke-dasharray="1.6 1.8"/></svg>
<div class="a" style="left:934px;top:74px;width:126px;height:16px;background:#a7a7a7;border-top:1px solid #c9c9c9;border-left:1px solid #c0c0c0;border-right:1px solid #c0c0c0;border-radius:2px 2px 0 0"></div>
<div class="t" style="left:938.5px;top:77.5px;font-size:10px;color:#5a5a5a;letter-spacing:-0.405px;font-weight:normal;">Layer Manager</div>
<svg style="left:1035px;top:78px" width="21" height="9"><path d="M1.5 1 H5.5 M2.5 1 V5 H4.5 V1 M1 5.5 H6 M3.5 5.5 V8" fill="none" stroke="#777" stroke-width="0.9"/><path d="M13 1 L19.5 7.5 M19.5 1 L13 7.5" stroke="#555" stroke-width="1.2"/></svg>
<div class="a" style="left:934px;top:90px;width:126px;height:616px;background:#fff"></div>
<div class="a" style="left:934px;top:90px;width:126px;height:23px;background:#bca646;border:1px dotted #5a4a18"></div>
<div class="t" style="left:987.5px;top:96.5px;font-size:11px;color:#111;letter-spacing:0px;font-weight:bold;">sim</div>
<div class="a" style="left:31px;top:708px;width:1029px;height:16px;background:linear-gradient(#3c4350 0%,#3c4350 38%,#32312e 50%,#302f2c 100%)"></div>
<div class="a" style="left:31px;top:723px;width:1029px;height:1px;background:#1e1a18"></div>
<div class="t" style="left:34.0px;top:712.5px;font-size:10px;color:#e8e8e8;letter-spacing:-0.581px;font-weight:normal;">Ready</div>
<div class="a" style="left:572px;top:711px;width:1px;height:12px;background:#5a5a5a"></div>
<div class="a" style="left:661px;top:711px;width:1px;height:12px;background:#5a5a5a"></div>
<div class="a" style="left:724px;top:711px;width:1px;height:12px;background:#5a5a5a"></div>
<div class="a" style="left:812px;top:711px;width:1px;height:12px;background:#5a5a5a"></div>
<div class="a" style="left:842px;top:711px;width:1px;height:12px;background:#5a5a5a"></div>
<div class="a" style="left:931px;top:711px;width:1px;height:12px;background:#5a5a5a"></div>
<div class="a" style="left:1018px;top:711px;width:1px;height:12px;background:#5a5a5a"></div>
<div class="a" style="left:1041px;top:711px;width:1px;height:12px;background:#5a5a5a"></div>
<div class="a" style="left:1046px;top:711px;width:1px;height:12px;background:#5a5a5a"></div>
<div class="t" style="left:664.4px;top:712.8px;font-size:9.5px;color:#8e8e8e;letter-spacing:-0.631px;font-weight:normal;">GRID LENGTH</div>
<div class="t" style="left:727.8px;top:712.8px;font-size:9.5px;color:#8e8e8e;letter-spacing:-0.247px;font-weight:normal;">50.000000</div>
<div class="t" style="left:815.5px;top:712.8px;font-size:9.5px;color:#8e8e8e;letter-spacing:-1.331px;font-weight:normal;">SCALE</div>
<div class="t" style="left:846.2px;top:712.8px;font-size:9.5px;color:#8e8e8e;letter-spacing:-0.266px;font-weight:normal;">5.436000</div>
<div class="t" style="left:933.7px;top:712.8px;font-size:9.5px;color:#f0f0f0;letter-spacing:-0.205px;font-weight:normal;">Ver. 16,0,25,0718</div>
<div class="t" style="left:1022.5px;top:712.8px;font-size:9.5px;color:#8e8e8e;letter-spacing:-1.182px;font-weight:normal;">CAP</div>
<svg style="left:1048px;top:712px" width="11" height="11"><g fill="#9a9a9a"><rect x="8" y="2" width="1.5" height="1.5"/><rect x="5" y="5" width="1.5" height="1.5"/><rect x="8" y="5" width="1.5" height="1.5"/><rect x="2" y="8" width="1.5" height="1.5"/><rect x="5" y="8" width="1.5" height="1.5"/><rect x="8" y="8" width="1.5" height="1.5"/></g></svg>
<div class="a" style="left:171px;top:114px;width:809px;height:511px;background:#f0f0f0;box-shadow:1px 1px 5px rgba(0,0,0,.3)"></div>
<div class="a" style="left:171px;top:114px;width:809px;height:21px;background:#fdfdfd"></div>
<div class="t" style="left:174.0px;top:119.5px;font-size:10px;color:#8c8c8c;letter-spacing:-0.017px;font-weight:normal;-webkit-text-stroke-width:0.1px">3D Structure Generation</div>
<div class="a" style="left:963px;top:116px;width:16px;height:15px;background:#e6e6e6"></div>
<svg style="left:968px;top:120px" width="7" height="7"><path d="M0.5 0.5 L6.5 6.5 M6.5 0.5 L0.5 6.5" stroke="#c8c8c8" stroke-width="1"/></svg>
<div class="a" style="left:171px;top:135px;width:163px;height:20px;background:linear-gradient(#eaecef,#d6d9dd 60%,#c8ccd1);border:1px solid #b4b8bd"></div>
<div class="t" style="left:176.0px;top:141.2px;font-size:9.5px;color:#1e1e2a;letter-spacing:0.203px;font-weight:bold;">Material DB</div>
<div class="a" style="left:171px;top:155px;width:163px;height:25px;background:#f0f0f0"></div>
<div class="a" style="left:172px;top:159px;width:115px;height:18px;background:#e4e4e4;border:1px solid #c6c6c6"></div>
<div class="t" style="left:175.2px;top:164.0px;font-size:9px;color:#333;letter-spacing:-0.112px;font-weight:normal;">C:\My TechWiz\DB\Mate</div>
<svg style="left:276px;top:166px" width="8" height="5"><path d="M0.5 0.5 L4 4 L7.5 0.5" fill="none" stroke="#666" stroke-width="1"/></svg>
<div class="a" style="left:289px;top:159px;width:20px;height:18px;background:#e4e4e4;border:1px solid #c6c6c6"></div>
<svg style="left:292px;top:163px" width="14" height="11" viewBox="0 0 14 11"><path d="M0.5 2 Q0.5 0.5 2 0.5 L5 0.5 L6.5 2 L12 2 Q13.5 2 13.5 3.5 L13.5 9.5 Q13.5 10.5 12.5 10.5 L1.5 10.5 Q0.5 10.5 0.5 9.5 Z" fill="#f4d040" stroke="#c89a10"/><path d="M0.5 4 L13.5 4" stroke="#fbe890"/></svg>
<div class="a" style="left:311px;top:159px;width:21px;height:18px;background:#e4e4e4;border:1px solid #c6c6c6"></div>
<svg style="left:314px;top:161px" width="15" height="14" viewBox="0 0 15 14"><path d="M2.5 6.5 A5 5 0 0 1 11.5 4" fill="none" stroke="#2a8ae0" stroke-width="2.6"/><path d="M9 1.5 L13.5 1.5 L13 6 Z" fill="#2a8ae0"/><path d="M12.5 7.5 A5 5 0 0 1 3.5 10" fill="none" stroke="#48a8f0" stroke-width="2.6"/><path d="M6 12.5 L1.5 12.5 L2 8 Z" fill="#48a8f0"/></svg>
<div class="a" style="left:171px;top:180px;width:163px;height:291px;background:#fff;border-top:1px solid #c8c8c8"></div>
<div class="t" style="left:176.0px;top:187.0px;font-size:9px;color:#333;letter-spacing:0.152px;font-weight:normal;">Sort by Type</div>
<div class="a" style="left:192px;top:201px;width:126px;height:16px;background:#efefef"></div>
<svg style="left:175px;top:202px" width="14" height="12" viewBox="0 0 14 12"><path d="M0.5 3 L5 3 L6 4 L12.5 4 L12.5 11.5 L0.5 11.5 Z" fill="#c8c888" stroke="#8a8a50"/><path d="M9.5 0.5 L13 4 L11 4 L11 7 L8 7 L8 4 L6 4 Z" fill="#30b030"/></svg>
<div class="t" style="left:193.0px;top:205.5px;font-size:9px;color:#333;letter-spacing:0px;font-weight:normal;">..</div>
<div class="a" style="left:177px;top:219px;width:11px;height:11px;background:linear-gradient(135deg,#fff6f6 0%,#f9d4d4 45%,#f0b4b4 100%);box-shadow:1px 1px 0 #d49c9c, inset 0 0 0 0.5px rgba(220,150,150,.5)"></div>
<div class="t" style="left:179.6px;top:220.3px;font-size:8.5px;color:#111;letter-spacing:0px;font-weight:bold;">L</div>
<div class="t" style="left:193.0px;top:220.6px;font-size:9px;color:#333;letter-spacing:-0.026px;font-weight:normal;">22.9.3_Dammann_RMS03-0...</div>
<div class="a" style="left:177px;top:234px;width:11px;height:11px;background:linear-gradient(135deg,#fff6f6 0%,#f9d4d4 45%,#f0b4b4 100%);box-shadow:1px 1px 0 #d49c9c, inset 0 0 0 0.5px rgba(220,150,150,.5)"></div>
<div class="t" style="left:179.6px;top:235.3px;font-size:8.5px;color:#111;letter-spacing:0px;font-weight:bold;">L</div>
<div class="t" style="left:193.0px;top:236.5px;font-size:9px;color:#333;letter-spacing:0px;font-weight:normal;">CLC</div>
<div class="a" style="left:177px;top:250px;width:11px;height:11px;background:linear-gradient(135deg,#fff6f6 0%,#f9d4d4 45%,#f0b4b4 100%);box-shadow:1px 1px 0 #d49c9c, inset 0 0 0 0.5px rgba(220,150,150,.5)"></div>
<div class="t" style="left:179.6px;top:251.3px;font-size:8.5px;color:#111;letter-spacing:0px;font-weight:bold;">L</div>
<div class="t" style="left:193.0px;top:252.3px;font-size:9px;color:#333;letter-spacing:0px;font-weight:normal;">E7</div>
<div class="a" style="left:177px;top:266px;width:11px;height:11px;background:linear-gradient(135deg,#fff6f6 0%,#f9d4d4 45%,#f0b4b4 100%);box-shadow:1px 1px 0 #d49c9c, inset 0 0 0 0.5px rgba(220,150,150,.5)"></div>
<div class="t" style="left:179.6px;top:267.4px;font-size:8.5px;color:#111;letter-spacing:0px;font-weight:bold;">L</div>
<div class="t" style="left:193.0px;top:268.2px;font-size:9px;color:#333;letter-spacing:-0.219px;font-weight:normal;">FrogLC</div>
<div class="a" style="left:177px;top:282px;width:11px;height:11px;background:linear-gradient(135deg,#fff6f6 0%,#f9d4d4 45%,#f0b4b4 100%);box-shadow:1px 1px 0 #d49c9c, inset 0 0 0 0.5px rgba(220,150,150,.5)"></div>
<div class="t" style="left:179.6px;top:283.4px;font-size:8.5px;color:#111;letter-spacing:0px;font-weight:bold;">L</div>
<div class="t" style="left:193.0px;top:284.1px;font-size:9px;color:#333;letter-spacing:0px;font-weight:normal;">HBM-2</div>
<div class="a" style="left:177px;top:298px;width:11px;height:11px;background:linear-gradient(135deg,#fff6f6 0%,#f9d4d4 45%,#f0b4b4 100%);box-shadow:1px 1px 0 #d49c9c, inset 0 0 0 0.5px rgba(220,150,150,.5)"></div>
<div class="t" style="left:179.6px;top:299.4px;font-size:8.5px;color:#111;letter-spacing:0px;font-weight:bold;">L</div>
<div class="t" style="left:193.0px;top:299.9px;font-size:9px;color:#333;letter-spacing:-0.042px;font-weight:normal;">HTW109100-100</div>
<div class="a" style="left:177px;top:314px;width:11px;height:11px;background:linear-gradient(135deg,#fff6f6 0%,#f9d4d4 45%,#f0b4b4 100%);box-shadow:1px 1px 0 #d49c9c, inset 0 0 0 0.5px rgba(220,150,150,.5)"></div>
<div class="t" style="left:179.6px;top:315.4px;font-size:8.5px;color:#111;letter-spacing:0px;font-weight:bold;">L</div>
<div class="t" style="left:193.0px;top:315.8px;font-size:9px;color:#333;letter-spacing:0px;font-weight:normal;">LC-FFS</div>
<div class="a" style="left:177px;top:330px;width:11px;height:11px;background:linear-gradient(135deg,#fff6f6 0%,#f9d4d4 45%,#f0b4b4 100%);box-shadow:1px 1px 0 #d49c9c, inset 0 0 0 0.5px rgba(220,150,150,.5)"></div>
<div class="t" style="left:179.6px;top:331.4px;font-size:8.5px;color:#111;letter-spacing:0px;font-weight:bold;">L</div>
<div class="t" style="left:193.0px;top:331.7px;font-size:9px;color:#333;letter-spacing:-0.263px;font-weight:normal;">LC-FFS_dye</div>
<div class="a" style="left:177px;top:346px;width:11px;height:11px;background:linear-gradient(135deg,#fff6f6 0%,#f9d4d4 45%,#f0b4b4 100%);box-shadow:1px 1px 0 #d49c9c, inset 0 0 0 0.5px rgba(220,150,150,.5)"></div>
<div class="t" style="left:179.6px;top:347.4px;font-size:8.5px;color:#111;letter-spacing:0px;font-weight:bold;">L</div>
<div class="t" style="left:193.0px;top:347.6px;font-size:9px;color:#333;letter-spacing:0px;font-weight:normal;">LC-IPS</div>
<div class="a" style="left:177px;top:361px;width:11px;height:11px;background:linear-gradient(135deg,#fff6f6 0%,#f9d4d4 45%,#f0b4b4 100%);box-shadow:1px 1px 0 #d49c9c, inset 0 0 0 0.5px rgba(220,150,150,.5)"></div>
<div class="t" style="left:179.6px;top:362.4px;font-size:8.5px;color:#111;letter-spacing:0px;font-weight:bold;">L</div>
<div class="t" style="left:193.0px;top:363.4px;font-size:9px;color:#333;letter-spacing:0px;font-weight:normal;">LC-TN</div>
<div class="a" style="left:177px;top:377px;width:11px;height:11px;background:linear-gradient(135deg,#fff6f6 0%,#f9d4d4 45%,#f0b4b4 100%);box-shadow:1px 1px 0 #d49c9c, inset 0 0 0 0.5px rgba(220,150,150,.5)"></div>
<div class="t" style="left:179.6px;top:378.4px;font-size:8.5px;color:#111;letter-spacing:0px;font-weight:bold;">L</div>
<div class="t" style="left:193.0px;top:379.3px;font-size:9px;color:#333;letter-spacing:0px;font-weight:normal;">LC</div>
<div class="a" style="left:177px;top:393px;width:11px;height:11px;background:linear-gradient(135deg,#fff6f6 0%,#f9d4d4 45%,#f0b4b4 100%);box-shadow:1px 1px 0 #d49c9c, inset 0 0 0 0.5px rgba(220,150,150,.5)"></div>
<div class="t" style="left:179.6px;top:394.4px;font-size:8.5px;color:#111;letter-spacing:0px;font-weight:bold;">L</div>
<div class="t" style="left:193.0px;top:395.2px;font-size:9px;color:#333;letter-spacing:0px;font-weight:normal;">LC_0.1</div>
<div class="a" style="left:177px;top:409px;width:11px;height:11px;background:linear-gradient(135deg,#fff6f6 0%,#f9d4d4 45%,#f0b4b4 100%);box-shadow:1px 1px 0 #d49c9c, inset 0 0 0 0.5px rgba(220,150,150,.5)"></div>
<div class="t" style="left:179.6px;top:410.4px;font-size:8.5px;color:#111;letter-spacing:0px;font-weight:bold;">L</div>
<div class="t" style="left:193.0px;top:411.0px;font-size:9px;color:#333;letter-spacing:0px;font-weight:normal;">MDA-00-3461</div>
<div class="a" style="left:177px;top:425px;width:11px;height:11px;background:linear-gradient(135deg,#fff6f6 0%,#f9d4d4 45%,#f0b4b4 100%);box-shadow:1px 1px 0 #d49c9c, inset 0 0 0 0.5px rgba(220,150,150,.5)"></div>
<div class="t" style="left:179.6px;top:426.4px;font-size:8.5px;color:#111;letter-spacing:0px;font-weight:bold;">L</div>
<div class="t" style="left:193.0px;top:426.9px;font-size:9px;color:#333;letter-spacing:-0.081px;font-weight:normal;">MLC-12000-000</div>
<div class="a" style="left:177px;top:441px;width:11px;height:11px;background:linear-gradient(135deg,#fff6f6 0%,#f9d4d4 45%,#f0b4b4 100%);box-shadow:1px 1px 0 #d49c9c, inset 0 0 0 0.5px rgba(220,150,150,.5)"></div>
<div class="t" style="left:179.6px;top:442.4px;font-size:8.5px;color:#111;letter-spacing:0px;font-weight:bold;">L</div>
<div class="t" style="left:193.0px;top:442.8px;font-size:9px;color:#333;letter-spacing:0px;font-weight:normal;">MLC-2140</div>
<div class="a" style="left:177px;top:457px;width:11px;height:11px;background:linear-gradient(135deg,#fff6f6 0%,#f9d4d4 45%,#f0b4b4 100%);box-shadow:1px 1px 0 #d49c9c, inset 0 0 0 0.5px rgba(220,150,150,.5)"></div>
<div class="t" style="left:179.6px;top:458.4px;font-size:8.5px;color:#111;letter-spacing:0px;font-weight:bold;">L</div>
<div class="t" style="left:193.0px;top:458.6px;font-size:9px;color:#333;letter-spacing:0px;font-weight:normal;">MLC-6608</div>
<div class="a" style="left:320px;top:181px;width:12px;height:290px;background:#f0f0f0"></div>
<svg style="left:322px;top:187px" width="8" height="5"><path d="M0.5 4.5 L4 1 L7.5 4.5" fill="none" stroke="#555" stroke-width="1.3"/></svg>
<div class="a" style="left:321px;top:196px;width:10px;height:35px;background:#cdcdcd"></div>
<svg style="left:322px;top:462px" width="8" height="5"><path d="M0.5 0.5 L4 4 L7.5 0.5" fill="none" stroke="#555" stroke-width="1.3"/></svg>
<div class="a" style="left:171px;top:471px;width:163px;height:26px;background:#f0f0f0;border-top:1px solid #d8d8d8"></div>
<div class="a" style="left:174px;top:476px;width:36px;height:17px;background:#e1e1e1;border:1px solid #c0c0c0"></div>
<div class="t" style="left:183.0px;top:480.0px;font-size:9px;color:#333;letter-spacing:-0.204px;font-weight:normal;">Type</div>
<div class="a" style="left:213px;top:476px;width:20px;height:17px;background:#e1e1e1;border:1px solid #c0c0c0"></div>
<svg style="left:217px;top:478px" width="12" height="13" viewBox="0 0 12 13"><rect x="1" y="1" width="8" height="10" rx="1" fill="#b8c8f0" stroke="#6070b0"/><circle cx="6" cy="6" r="2.5" fill="#e0e8ff" stroke="#5060a0"/><path d="M8 9 L11 12" stroke="#e08020" stroke-width="2"/></svg>
<div class="a" style="left:236px;top:476px;width:74px;height:17px;background:#fff;border:1px solid #adadad"></div>
<div class="a" style="left:312px;top:476px;width:20px;height:17px;background:#e1e1e1;border:1px solid #c0c0c0"></div>
<svg style="left:315px;top:478px" width="14" height="13" viewBox="0 0 14 13"><path d="M1 9 Q4 5 7 9" fill="none" stroke="#6070a0" stroke-width="1.5"/><path d="M3 11 Q6 7 9 11" fill="none" stroke="#6070a0" stroke-width="1.5"/><path d="M7 5 L10 1 L13 5 L11 5 L11 8 L9 8 L9 5 Z" fill="#30b040"/></svg>
<div class="a" style="left:171px;top:497px;width:163px;height:92px;background:#fff;border-top:1px solid #d8d8d8"></div>
<div class="a" style="left:333px;top:155px;width:1px;height:434px;background:#c4c4c4"></div>
<div class="a" style="left:171px;top:588px;width:163px;height:19px;background:linear-gradient(#fde6c0,#f7cd8c 55%,#efbd72);border-top:2px solid #b9b9b9"></div>
<div class="t" style="left:176.0px;top:593.5px;font-size:10px;color:#1e1e2a;letter-spacing:0.226px;font-weight:bold;">Material DB</div>
<div class="a" style="left:171px;top:607px;width:163px;height:18px;background:linear-gradient(#eef0f3,#d8dbe0 60%,#c4c8ce);border-top:1px solid #c0c4c8"></div>
<div class="t" style="left:176.0px;top:611.5px;font-size:10px;color:#1e1e2a;letter-spacing:0.137px;font-weight:bold;">Layer DB</div>
<div class="a" style="left:341px;top:146px;width:420px;height:350px;border:1px solid #d5d5d5;border-radius:2px"></div>
<div class="a" style="left:350px;top:141px;width:46px;height:10px;background:#f0f0f0"></div>
<div class="t" style="left:353.0px;top:141.5px;font-size:9px;color:#333;letter-spacing:0.028px;font-weight:normal;">Stack List</div>
<div class="a" style="left:346px;top:155px;width:408px;height:309px;background:#fff;border-top:2px solid #a8a8a8;border-left:1px solid #b8b8b8;border-right:1px solid #b8b8b8;border-bottom:1px solid #b8b8b8"></div>
<div class="a" style="left:437px;top:157px;width:1px;height:293px;background:#e8e8e8"></div>
<div class="a" style="left:497px;top:157px;width:1px;height:293px;background:#e8e8e8"></div>
<div class="a" style="left:559px;top:157px;width:1px;height:293px;background:#e8e8e8"></div>
<div class="a" style="left:584px;top:157px;width:1px;height:293px;background:#e8e8e8"></div>
<div class="a" style="left:643px;top:157px;width:1px;height:293px;background:#e8e8e8"></div>
<div class="a" style="left:680px;top:157px;width:1px;height:293px;background:#e8e8e8"></div>
<div class="a" style="left:714px;top:157px;width:1px;height:293px;background:#e8e8e8"></div>
<div class="a" style="left:735px;top:157px;width:1px;height:293px;background:#e8e8e8"></div>
<div class="a" style="left:347px;top:191px;width:406px;height:1px;background:#e6e6e6"></div>
<div class="a" style="left:347px;top:207px;width:406px;height:1px;background:#e6e6e6"></div>
<div class="a" style="left:347px;top:223px;width:406px;height:1px;background:#e6e6e6"></div>
<div class="a" style="left:347px;top:239px;width:406px;height:1px;background:#e6e6e6"></div>
<div class="a" style="left:347px;top:255px;width:406px;height:1px;background:#e6e6e6"></div>
<div class="a" style="left:347px;top:270px;width:406px;height:1px;background:#e6e6e6"></div>
<div class="a" style="left:347px;top:286px;width:406px;height:1px;background:#e6e6e6"></div>
<div class="a" style="left:347px;top:302px;width:406px;height:1px;background:#e6e6e6"></div>
<div class="a" style="left:347px;top:318px;width:406px;height:1px;background:#e6e6e6"></div>
<div class="a" style="left:347px;top:334px;width:406px;height:1px;background:#e6e6e6"></div>
<div class="a" style="left:347px;top:350px;width:406px;height:1px;background:#e6e6e6"></div>
<div class="a" style="left:347px;top:366px;width:406px;height:1px;background:#e6e6e6"></div>
<div class="a" style="left:347px;top:382px;width:406px;height:1px;background:#e6e6e6"></div>
<div class="a" style="left:347px;top:397px;width:406px;height:1px;background:#e6e6e6"></div>
<div class="a" style="left:347px;top:413px;width:406px;height:1px;background:#e6e6e6"></div>
<div class="a" style="left:347px;top:429px;width:406px;height:1px;background:#e6e6e6"></div>
<div class="a" style="left:347px;top:445px;width:406px;height:1px;background:#e6e6e6"></div>
<div class="t" style="left:371.5px;top:162.5px;font-size:9px;color:#333;letter-spacing:0px;font-weight:normal;">e</div>
<div class="t" style="left:451.6px;top:162.5px;font-size:9px;color:#333;letter-spacing:-0.139px;font-weight:normal;">Material</div>
<div class="t" style="left:511.4px;top:162.5px;font-size:9px;color:#333;letter-spacing:-0.002px;font-weight:normal;">Thickness</div>
<div class="t" style="left:564.2px;top:162.5px;font-size:9px;color:#333;letter-spacing:0px;font-weight:normal;">Div.</div>
<div class="t" style="left:603.4px;top:162.5px;font-size:9px;color:#333;letter-spacing:-0.129px;font-weight:normal;">Mask</div>
<div class="t" style="left:650.6px;top:162.5px;font-size:9px;color:#333;letter-spacing:0.037px;font-weight:normal;">Taper</div>
<div class="t" style="left:685.9px;top:162.5px;font-size:9px;color:#333;letter-spacing:-0.119px;font-weight:normal;">Sub...</div>
<div class="t" style="left:717.7px;top:162.5px;font-size:9px;color:#333;letter-spacing:0px;font-weight:normal;">S...</div>
<div class="t" style="left:738.7px;top:162.5px;font-size:9px;color:#333;letter-spacing:0px;font-weight:normal;">V...</div>
<div class="t" style="left:379.4px;top:179.5px;font-size:9px;color:#333;letter-spacing:-0.063px;font-weight:normal;">GLASS</div>
<div class="t" style="left:453.0px;top:179.5px;font-size:9px;color:#333;letter-spacing:-0.003px;font-weight:normal;">GLASS</div>
<div class="t" style="left:518.5px;top:179.5px;font-size:9px;color:#333;letter-spacing:-0.041px;font-weight:normal;">1.000 um</div>
<div class="t" style="left:569.1px;top:179.5px;font-size:9px;color:#333;letter-spacing:0px;font-weight:normal;">1</div>
<div class="t" style="left:612.4px;top:179.5px;font-size:9px;color:#333;letter-spacing:0px;font-weight:normal;">-</div>
<div class="t" style="left:660.5px;top:179.5px;font-size:9px;color:#333;letter-spacing:0px;font-weight:normal;">-</div>
<div class="t" style="left:686.5px;top:179.5px;font-size:9px;color:#333;letter-spacing:0px;font-weight:normal;">SUB.</div>
<div class="t" style="left:721.5px;top:179.5px;font-size:9px;color:#333;letter-spacing:0px;font-weight:normal;">Y</div>
<div class="t" style="left:742.2px;top:179.5px;font-size:9px;color:#333;letter-spacing:0px;font-weight:normal;">N</div>
<div class="t" style="left:379.4px;top:195.5px;font-size:9px;color:#333;letter-spacing:-0.189px;font-weight:normal;">LC_0.1</div>
<div class="t" style="left:454.1px;top:195.5px;font-size:9px;color:#333;letter-spacing:-0.189px;font-weight:normal;">LC_0.1</div>
<div class="t" style="left:518.5px;top:195.5px;font-size:9px;color:#333;letter-spacing:-0.041px;font-weight:normal;">2.500 um</div>
<div class="t" style="left:566.6px;top:195.5px;font-size:9px;color:#333;letter-spacing:0px;font-weight:normal;">15</div>
<div class="t" style="left:612.4px;top:195.5px;font-size:9px;color:#333;letter-spacing:0px;font-weight:normal;">-</div>
<div class="t" style="left:660.5px;top:195.5px;font-size:9px;color:#333;letter-spacing:0px;font-weight:normal;">-</div>
<div class="t" style="left:688.0px;top:195.5px;font-size:9px;color:#333;letter-spacing:0px;font-weight:normal;">FILL</div>
<div class="t" style="left:721.5px;top:195.5px;font-size:9px;color:#333;letter-spacing:0px;font-weight:normal;">Y</div>
<div class="t" style="left:742.2px;top:195.5px;font-size:9px;color:#333;letter-spacing:0px;font-weight:normal;">N</div>
<div class="t" style="left:379.4px;top:211.5px;font-size:9px;color:#333;letter-spacing:-0.063px;font-weight:normal;">GLASS</div>
<div class="t" style="left:453.0px;top:211.5px;font-size:9px;color:#333;letter-spacing:-0.003px;font-weight:normal;">GLASS</div>
<div class="t" style="left:518.5px;top:211.5px;font-size:9px;color:#333;letter-spacing:-0.041px;font-weight:normal;">1.000 um</div>
<div class="t" style="left:569.1px;top:211.5px;font-size:9px;color:#333;letter-spacing:0px;font-weight:normal;">1</div>
<div class="t" style="left:612.4px;top:211.5px;font-size:9px;color:#333;letter-spacing:0px;font-weight:normal;">-</div>
<div class="t" style="left:660.5px;top:211.5px;font-size:9px;color:#333;letter-spacing:0px;font-weight:normal;">-</div>
<div class="t" style="left:686.5px;top:211.5px;font-size:9px;color:#333;letter-spacing:0px;font-weight:normal;">SUB.</div>
<div class="t" style="left:721.5px;top:211.5px;font-size:9px;color:#333;letter-spacing:0px;font-weight:normal;">Y</div>
<div class="t" style="left:742.2px;top:211.5px;font-size:9px;color:#333;letter-spacing:0px;font-weight:normal;">N</div>
<div class="a" style="left:362.5px;top:194.5px;width:11px;height:11px;background:linear-gradient(135deg,#fff6f6 0%,#f9d4d4 45%,#f0b4b4 100%);box-shadow:1px 1px 0 #d49c9c, inset 0 0 0 0.5px rgba(220,150,150,.5)"></div>
<div class="t" style="left:365.1px;top:195.8px;font-size:8.5px;color:#111;letter-spacing:0px;font-weight:bold;">L</div>
<div class="a" style="left:362.5px;top:210.5px;width:11px;height:11px;background:linear-gradient(135deg,#ffffff 0%,#fbf0e0 45%,#f2dcc0 100%);box-shadow:1px 1px 0 #d8c4a8, inset 0 0 0 0.5px rgba(220,150,150,.5)"></div>
<div class="t" style="left:366.6px;top:211.3px;font-size:10px;color:#111;letter-spacing:0px;font-weight:bold;font-family:'Liberation Serif'">I</div>
<svg style="left:0;top:0" width="1067" height="732"><path d="M354.5 189 V215.5 M354.5 199.5 H360 M354.5 215.5 H360" stroke="#aaa" stroke-dasharray="1 1"/></svg>
<div class="a" style="left:346px;top:157px;width:26px;height:33px;background:#f0f0f0"></div>
<div class="a" style="left:347px;top:450px;width:406px;height:13px;background:#f0f0f0"></div>
<div class="a" style="left:362px;top:451px;width:372px;height:11px;background:#cdcdcd"></div>
<svg style="left:353px;top:453px" width="5" height="8"><path d="M4.5 0.5 L1 4 L4.5 7.5" fill="none" stroke="#555" stroke-width="1.3"/></svg>
<svg style="left:743px;top:453px" width="5" height="8"><path d="M0.5 0.5 L4 4 L0.5 7.5" fill="none" stroke="#555" stroke-width="1.3"/></svg>
<div class="a" style="left:346px;top:471px;width:70px;height:18px;background:#e5e5e5;border:1px solid #bdbdbd"></div>
<div class="t" style="left:349.8px;top:475.5px;font-size:9px;color:#333;letter-spacing:-0.003px;font-weight:normal;">Recent List</div>
<svg style="left:405px;top:478px" width="8" height="5"><path d="M0.5 0.5 L4 4 L7.5 0.5" fill="none" stroke="#666" stroke-width="1"/></svg>
<div class="a" style="left:420px;top:470px;width:21px;height:19px;background:#e1e1e1;border:1px solid #c2c2c2"></div>
<div class="a" style="left:445px;top:470px;width:21px;height:19px;background:#e1e1e1;border:1px solid #c2c2c2"></div>
<div class="a" style="left:470px;top:470px;width:21px;height:19px;background:#e1e1e1;border:1px solid #c2c2c2"></div>
<div class="a" style="left:495px;top:470px;width:21px;height:19px;background:#e1e1e1;border:1px solid #c2c2c2"></div>
<div class="a" style="left:520px;top:470px;width:21px;height:19px;background:#e1e1e1;border:1px solid #c2c2c2"></div>
<div class="a" style="left:545px;top:470px;width:21px;height:19px;background:#e1e1e1;border:1px solid #c2c2c2"></div>
<div class="a" style="left:570px;top:470px;width:21px;height:19px;background:#e1e1e1;border:1px solid #c2c2c2"></div>
<div class="a" style="left:595px;top:470px;width:21px;height:19px;background:#e1e1e1;border:1px solid #c2c2c2"></div>
<div class="a" style="left:620px;top:470px;width:21px;height:19px;background:#e1e1e1;border:1px solid #c2c2c2"></div>
<div class="a" style="left:645px;top:470px;width:21px;height:19px;background:#e1e1e1;border:1px solid #c2c2c2"></div>
<div class="a" style="left:670px;top:470px;width:21px;height:19px;background:#e1e1e1;border:1px solid #c2c2c2"></div>
<svg style="left:423px;top:473px" width="15" height="14" viewBox="0 0 15 14"><path d="M1 5 L6 5 L7 6 L13 6 L11 13 L1 13 Z" fill="#f8d850" stroke="#c8a020"/><path d="M7 4 Q9 0 13 2" fill="none" stroke="#30a040" stroke-width="2"/><path d="M12 0 L14 3 L11 4 Z" fill="#30a040"/></svg>
<svg style="left:448px;top:473px" width="15" height="14" viewBox="0 0 15 14"><path d="M2 2 H12 L13 3 V12 H2 Z" fill="#f4f8ff" stroke="#2a62c4" stroke-width="2"/><rect x="4.5" y="2" width="6" height="3.5" fill="#2a62c4"/><rect x="6" y="8.5" width="7.5" height="4.5" rx="1" fill="#d8d8d8" stroke="#666" stroke-width=".8"/><rect x="7.5" y="10" width="2" height="1.5" fill="#666"/></svg>
<svg style="left:473px;top:473px" width="15" height="14" viewBox="0 0 15 14"><path d="M5 1 H10 V5 H14 V10 H10 V14 H5 V10 H1 V5 H5 Z" fill="#40c040" stroke="#209020"/></svg>
<svg style="left:498px;top:473px" width="15" height="14" viewBox="0 0 15 14"><path d="M2 3 L5 1 L7.5 4.5 L10 1 L13 3 L10 7 L13 11 L10 13 L7.5 9.5 L5 13 L2 11 L5 7 Z" fill="#e83020" stroke="#b01010" stroke-width=".6"/></svg>
<svg style="left:523px;top:474px" width="15" height="13" viewBox="0 0 15 13"><path d="M3 3.5 L5.5 5 L7 3 L7 5.8 L9 6.5 L6.8 7.2 L6.5 9.5 L5.3 7.5 L3 8 L4.5 6 Z" fill="#e84030"/><path d="M8 6.5 L10 8 L11.5 6.5 L11.3 8.8 L13 9.8 L11 10.2 L10.5 12 L9.5 10.5 L7.5 10.8 L8.8 9.2 Z" fill="#e84030"/></svg>
<svg style="left:548px;top:473px" width="15" height="14" viewBox="0 0 15 14"><path d="M7.5 1 L13 7 L10 7 L10 13 L5 13 L5 7 L2 7 Z" fill="#40c040" stroke="#209020" stroke-width=".7"/></svg>
<svg style="left:573px;top:473px" width="15" height="14" viewBox="0 0 15 14"><path d="M7.5 13 L13 7 L10 7 L10 1 L5 1 L5 7 L2 7 Z" fill="#40c040" stroke="#209020" stroke-width=".7"/></svg>
<svg style="left:598px;top:473px" width="15" height="14" viewBox="0 0 15 14"><path d="M2 10 Q2 3 8 3 Q12 3 12 7" fill="none" stroke="#3090e0" stroke-width="2.5"/><path d="M9 6 L14 6 L11.5 10 Z" fill="#3090e0"/></svg>
<svg style="left:623px;top:473px" width="15" height="14" viewBox="0 0 15 14"><path d="M1 1 H11 L13 13 H3 Z" fill="#5060b0"/><circle cx="8" cy="7" r="3" fill="#d8e8ff" stroke="#303070"/><path d="M10 9 L13 12" stroke="#e08030" stroke-width="2"/></svg>
<svg style="left:648px;top:473px" width="15" height="14" viewBox="0 0 15 14"><rect x="2" y="1.5" width="3.8" height="11" rx="1" fill="#e8566a"/><rect x="5.6" y="1.5" width="3.8" height="11" fill="#56dca8"/><rect x="9.2" y="1.5" width="3.8" height="11" rx="1" fill="#4a84e0"/></svg>
<svg style="left:673px;top:473px" width="15" height="14" viewBox="0 0 15 14"><rect x="2" y="2" width="11" height="10" rx="1.5" fill="#e4ecf8" stroke="#a8bce0"/><path d="M4.5 10 L10.5 4 M5 5 L10 10" fill="none" stroke="#f08070" stroke-width="1.3"/></svg>
<div class="a" style="left:767px;top:135px;width:213px;height:311px;background:#fff;border:1px solid #a0a0a0;border-top:none"></div>
<div class="a" style="left:767px;top:135px;width:1px;height:311px;background:#888"></div>
<div class="a" style="left:768px;top:137px;width:14px;height:308px;background:#f0f0f0"></div>
<div class="a" style="left:768px;top:137px;width:211px;height:16px;background:#efefef"></div>
<div class="t" style="left:785.5px;top:139.8px;font-size:9.5px;color:#222;letter-spacing:0.054px;font-weight:bold;">Mesh Condition</div>
<div class="a" style="left:782px;top:167.0px;width:197px;height:1px;background:#eeeeee"></div>
<div class="a" style="left:870px;top:152.0px;width:1px;height:16px;background:#eeeeee"></div>
<div class="t" style="left:784.8px;top:155.0px;font-size:9px;color:#222;letter-spacing:-0.062px;font-weight:normal;">Number of Cores</div>
<div class="t" style="left:874.0px;top:155.2px;font-size:9.5px;color:#222;letter-spacing:0px;font-weight:normal;">4</div>
<div class="a" style="left:782px;top:182.9px;width:197px;height:1px;background:#eeeeee"></div>
<div class="a" style="left:870px;top:167.9px;width:1px;height:16px;background:#eeeeee"></div>
<div class="a" style="left:782px;top:167.9px;width:88px;height:15px;background:#0a78d7"></div>
<div class="t" style="left:784.8px;top:170.9px;font-size:9px;color:#e8f4ff;letter-spacing:0.047px;font-weight:normal;">Unit Length [um]</div>
<div class="t" style="left:874.0px;top:171.2px;font-size:9.5px;color:#222;letter-spacing:0px;font-weight:normal;">0.2</div>
<div class="a" style="left:782px;top:198.8px;width:197px;height:1px;background:#eeeeee"></div>
<div class="a" style="left:870px;top:183.8px;width:1px;height:16px;background:#eeeeee"></div>
<div class="t" style="left:784.8px;top:186.8px;font-size:9px;color:#222;letter-spacing:-0.003px;font-weight:normal;">Refinement</div>
<div class="t" style="left:874.0px;top:187.1px;font-size:9.5px;color:#222;letter-spacing:0px;font-weight:normal;">No</div>
<svg style="left:964px;top:189.8px" width="8" height="5"><path d="M0 0 L7 0 L3.5 4 Z" fill="#e03030"/></svg>
<div class="a" style="left:782px;top:214.6px;width:197px;height:1px;background:#eeeeee"></div>
<div class="a" style="left:870px;top:199.6px;width:1px;height:16px;background:#eeeeee"></div>
<div class="t" style="left:784.8px;top:202.6px;font-size:9px;color:#222;letter-spacing:-0.136px;font-weight:normal;">B.C. X</div>
<div class="t" style="left:874.0px;top:202.8px;font-size:9.5px;color:#222;letter-spacing:-0.429px;font-weight:normal;">Neumann</div>
<svg style="left:964px;top:205.6px" width="8" height="5"><path d="M0 0 L7 0 L3.5 4 Z" fill="#e03030"/></svg>
<div class="a" style="left:782px;top:230.5px;width:197px;height:1px;background:#eeeeee"></div>
<div class="a" style="left:870px;top:215.5px;width:1px;height:16px;background:#eeeeee"></div>
<div class="t" style="left:784.8px;top:218.5px;font-size:9px;color:#222;letter-spacing:-0.11px;font-weight:normal;">B.C. Y</div>
<div class="t" style="left:874.0px;top:218.8px;font-size:9.5px;color:#222;letter-spacing:-0.429px;font-weight:normal;">Neumann</div>
<svg style="left:964px;top:221.5px" width="8" height="5"><path d="M0 0 L7 0 L3.5 4 Z" fill="#e03030"/></svg>
<div class="a" style="left:782px;top:246.4px;width:197px;height:1px;background:#eeeeee"></div>
<div class="a" style="left:870px;top:231.4px;width:1px;height:16px;background:#eeeeee"></div>
<div class="t" style="left:784.8px;top:234.4px;font-size:9px;color:#222;letter-spacing:0.058px;font-weight:normal;">Target Avg. CellGap</div>
<div class="t" style="left:874.0px;top:234.7px;font-size:9.5px;color:#222;letter-spacing:0px;font-weight:normal;">No</div>
<svg style="left:964px;top:237.4px" width="8" height="5"><path d="M0 0 L7 0 L3.5 4 Z" fill="#e03030"/></svg>
<div class="a" style="left:782px;top:262.3px;width:197px;height:1px;background:#eeeeee"></div>
<div class="a" style="left:870px;top:247.3px;width:1px;height:16px;background:#eeeeee"></div>
<div class="t" style="left:784.8px;top:250.3px;font-size:9px;color:#222;letter-spacing:-0.16px;font-weight:normal;">Gap Position X [um]</div>
<div class="t" style="left:874.0px;top:250.6px;font-size:9.5px;color:#222;letter-spacing:0px;font-weight:normal;">0</div>
<div class="a" style="left:782px;top:278.2px;width:197px;height:1px;background:#eeeeee"></div>
<div class="a" style="left:870px;top:263.2px;width:1px;height:16px;background:#eeeeee"></div>
<div class="t" style="left:784.8px;top:266.2px;font-size:9px;color:#222;letter-spacing:-0.143px;font-weight:normal;">Gap Position Y [um]</div>
<div class="t" style="left:874.0px;top:266.4px;font-size:9.5px;color:#222;letter-spacing:0px;font-weight:normal;">0</div>
<div class="a" style="left:782px;top:294.0px;width:197px;height:1px;background:#eeeeee"></div>
<div class="a" style="left:870px;top:279.0px;width:1px;height:16px;background:#eeeeee"></div>
<div class="t" style="left:784.8px;top:282.0px;font-size:9px;color:#222;letter-spacing:0px;font-weight:normal;">STL Out [m]</div>
<div class="t" style="left:874.0px;top:282.2px;font-size:9.5px;color:#222;letter-spacing:-0.555px;font-weight:normal;">None</div>
<svg style="left:964px;top:285.0px" width="8" height="5"><path d="M0 0 L7 0 L3.5 4 Z" fill="#e03030"/></svg>
<div class="a" style="left:782px;top:309.9px;width:197px;height:1px;background:#eeeeee"></div>
<div class="a" style="left:870px;top:294.9px;width:1px;height:16px;background:#eeeeee"></div>
<div class="t" style="left:784.8px;top:297.9px;font-size:9px;color:#222;letter-spacing:-0.238px;font-weight:normal;">STL Scale Factor</div>
<div class="t" style="left:874.0px;top:298.1px;font-size:9.5px;color:#222;letter-spacing:0px;font-weight:normal;">1</div>
<div class="a" style="left:768px;top:310.8px;width:211px;height:16px;background:#efefef"></div>
<div class="a" style="left:771px;top:313.8px;width:9px;height:9px;border:1px solid #999;background:#fff"></div>
<div class="a" style="left:773px;top:317.8px;width:5px;height:1px;background:#333"></div>
<div class="t" style="left:785.5px;top:313.6px;font-size:9.5px;color:#222;letter-spacing:0.003px;font-weight:bold;">Touch Condition</div>
<div class="a" style="left:782px;top:341.7px;width:197px;height:1px;background:#eeeeee"></div>
<div class="a" style="left:870px;top:326.7px;width:1px;height:16px;background:#eeeeee"></div>
<div class="t" style="left:784.8px;top:329.4px;font-size:9.5px;color:#222;letter-spacing:0px;font-weight:bold;">Touch</div>
<div class="t" style="left:874.0px;top:329.9px;font-size:9.5px;color:#222;letter-spacing:0px;font-weight:normal;">No</div>
<svg style="left:964px;top:332.7px" width="8" height="5"><path d="M0 0 L7 0 L3.5 4 Z" fill="#e03030"/></svg>
<div class="a" style="left:782px;top:357.6px;width:197px;height:1px;background:#eeeeee"></div>
<div class="a" style="left:870px;top:342.6px;width:1px;height:16px;background:#eeeeee"></div>
<div class="t" style="left:784.8px;top:345.4px;font-size:9.5px;color:#222;letter-spacing:0px;font-weight:bold;">Bending</div>
<div class="t" style="left:874.0px;top:345.9px;font-size:9.5px;color:#222;letter-spacing:0px;font-weight:normal;">No</div>
<svg style="left:964px;top:348.6px" width="8" height="5"><path d="M0 0 L7 0 L3.5 4 Z" fill="#e03030"/></svg>
<div class="a" style="left:782px;top:373.4px;width:197px;height:1px;background:#eeeeee"></div>
<div class="a" style="left:870px;top:358.4px;width:1px;height:16px;background:#eeeeee"></div>
<div class="t" style="left:784.8px;top:361.1px;font-size:9.5px;color:#222;letter-spacing:0.129px;font-weight:bold;">Advanced Mesh</div>
<div class="t" style="left:874.0px;top:361.6px;font-size:9.5px;color:#222;letter-spacing:0px;font-weight:normal;">No</div>
<svg style="left:964px;top:364.4px" width="8" height="5"><path d="M0 0 L7 0 L3.5 4 Z" fill="#e03030"/></svg>
<div class="a" style="left:773px;top:452px;width:98px;height:20px;background:#e1e1e1;border:1px solid #adadad"></div>
<div class="t" style="left:799.2px;top:458.0px;font-size:9px;color:#222;letter-spacing:-0.075px;font-weight:normal;">Mesh Condition</div>
<div class="a" style="left:876px;top:452px;width:98px;height:20px;background:#e1e1e1;border:1px solid #adadad"></div>
<div class="t" style="left:899.2px;top:458.0px;font-size:9px;color:#222;letter-spacing:-0.102px;font-weight:normal;">Preview &amp; Check</div>
<div class="a" style="left:773px;top:476px;width:98px;height:19px;background:#e1e1e1;border:1px solid #adadad"></div>
<div class="t" style="left:781.5px;top:481.5px;font-size:9px;color:#222;letter-spacing:-0.047px;font-weight:normal;">Generate only Mesh</div>
<div class="a" style="left:876px;top:476px;width:98px;height:19px;background:#e1e1e1;border:1px solid #adadad"></div>
<div class="t" style="left:881.0px;top:481.5px;font-size:9px;color:#222;letter-spacing:0.06px;font-weight:normal;">Generate with Project</div>
<svg style="left:780px;top:455px" width="14" height="14" viewBox="0 0 14 14"><circle cx="4.5" cy="9.5" r="3" fill="#b0b0e8" stroke="#7070c0"/><circle cx="9.5" cy="4.5" r="3" fill="#b0b0e8" stroke="#7070c0"/><path d="M5 8 L8.5 5" stroke="#7070c0" stroke-width="1.5"/></svg>
<svg style="left:880px;top:454px" width="16" height="16" viewBox="0 0 16 16"><circle cx="6" cy="6" r="4.5" fill="#d8ecff" stroke="#4a80c0" stroke-width="1.5"/><path d="M9 9 L14.5 14.5" stroke="#d89040" stroke-width="2.8"/></svg>
<div class="a" style="left:341px;top:502px;width:639px;height:96px;background:#fff;border:1px solid #a8a8a8;border-right:none"></div>
<div class="t" style="left:345.5px;top:505.0px;font-size:10px;color:#333;letter-spacing:-0.105px;font-weight:normal;">GLASS is inserted.</div>
<div class="t" style="left:345.5px;top:516.7px;font-size:10px;color:#333;letter-spacing:0px;font-weight:normal;">LC_0.1 is inserted.</div>
<div class="t" style="left:345.5px;top:528.4px;font-size:10px;color:#333;letter-spacing:-0.105px;font-weight:normal;">GLASS is inserted.</div>
<div class="t" style="left:345.5px;top:540.1px;font-size:10px;color:#333;letter-spacing:-0.002px;font-weight:normal;">C:₩Users₩JMBaek₩Desktop₩2025 Update (3Q)₩PJT₩PB Lens₩layout₩stack.sdf is opened.</div>
<div class="t" style="left:345.5px;top:551.8px;font-size:10px;color:#333;letter-spacing:0px;font-weight:normal;">C:₩Users₩JMBaek₩Desktop₩2025 Update (3Q)₩PJT₩PB Lens₩layout₩stack.sdf is saved.</div>
<div class="t" style="left:341.0px;top:608.0px;font-size:9px;color:#333;letter-spacing:-0.203px;font-weight:normal;">Ready</div>
<div class="a" style="left:384px;top:605px;width:489px;height:13px;background:#e6e6e6;border:1px solid #bcbcbc"></div>
<div class="t" style="left:881.0px;top:607.8px;font-size:9.5px;color:#222;letter-spacing:-0.458px;font-weight:normal;">0 %</div>
<div class="a" style="left:914px;top:602px;width:61px;height:19px;background:#cccccc;border:1px solid #bfbfbf"></div>
<div class="t" style="left:930.5px;top:607.2px;font-size:9.5px;color:#8a8a8a;letter-spacing:-0.263px;font-weight:normal;">Cancel</div>
<svg style="left:0;top:0" width="1067" height="732">
<rect x="262" y="66" width="26.5" height="28.5" fill="none" stroke="#ff0000" stroke-width="3" stroke-dasharray="8 3.2"/>
<rect x="376" y="183.5" width="384.5" height="60" fill="none" stroke="#ff0000" stroke-width="3" stroke-dasharray="8 3.2"/>
<rect x="779" y="135.5" width="200.5" height="98.5" fill="none" stroke="#ff0000" stroke-width="3" stroke-dasharray="8 3.2"/>
<rect x="886.5" y="488" width="114.5" height="25.5" fill="none" stroke="#ff0000" stroke-width="3" stroke-dasharray="8 3.2"/>
</svg>
<div class="a" style="left:205px;top:43px;width:29px;height:34px;background:#eeeeef"></div>
<div class="a" style="left:766px;top:121px;width:29px;height:28px;background:#efefef"></div>
<div class="a" style="left:1003px;top:480px;width:28px;height:33px;background:#efefef"></div>
<svg style="left:0;top:0" width="1067" height="732"><circle cx="237.2" cy="76.1" r="11.8" fill="none" stroke="#ff1a1a" stroke-width="1.5"/></svg>
<div class="t" style="left:232.5px;top:67.9px;font-size:17px;color:#ff1a1a;letter-spacing:0px;font-weight:normal;font-family:'Liberation Serif'">1</div>
<svg style="left:0;top:0" width="1067" height="732"><circle cx="357.2" cy="175.7" r="11.5" fill="none" stroke="#ff1a1a" stroke-width="1.5"/></svg>
<div class="t" style="left:352.2px;top:167.0px;font-size:18px;color:#ff1a1a;letter-spacing:0px;font-weight:normal;font-family:'Liberation Sans'">2</div>
<svg style="left:0;top:0" width="1067" height="732"><circle cx="780.2" cy="136.2" r="12" fill="none" stroke="#ff1a1a" stroke-width="1.5"/></svg>
<div class="t" style="left:774.9px;top:127.0px;font-size:19px;color:#ff1a1a;letter-spacing:0px;font-weight:normal;font-family:'Liberation Sans'">3</div>
<svg style="left:0;top:0" width="1067" height="732"><circle cx="1014" cy="495" r="9.8" fill="none" stroke="#ff1a1a" stroke-width="1.7"/></svg>
<div class="t" style="left:1009.7px;top:487.6px;font-size:15.5px;color:#ff1a1a;letter-spacing:0px;font-weight:normal;font-family:'Liberation Serif'">4</div>
</body></html>
